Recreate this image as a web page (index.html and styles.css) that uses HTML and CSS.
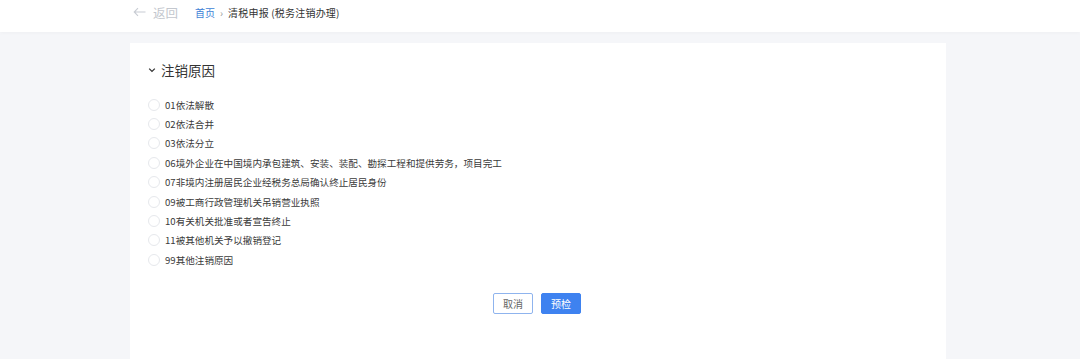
FILE: index.html
```html
<!DOCTYPE html>
<html lang="zh-CN">
<head>
  <meta charset="UTF-8" />
  <meta name="viewport" content="width=device-width, initial-scale=1" />
  <title>清税申报（税务注销办理）</title>
  <link rel="stylesheet" href="styles.css">
</head>
<body>

<div class="topbar">
  <div class="topbar-inner">
    <a class="back" href="#">
      <svg class="back-icon" width="13" height="10" viewBox="0 0 13 10">
        <path d="M12.5 5H1.2M5 1.2L1.2 5L5 8.8" fill="none" stroke="#c8ccd3" stroke-width="1.1" />
      </svg>
      返回
    </a>
    <div class="crumbs">
      <a href="#">首页</a>
      <span class="sep">›</span>
      <span class="current">清税申报 (税务注销办理)</span>
    </div>
  </div>
</div>

<div class="main">
  <div class="card">
    <div class="section-title">
      <svg class="chevron" width="8" height="6" viewBox="0 0 8 6">
        <path d="M1.2 1.6L4 4.4L6.8 1.6" fill="none" stroke="#333" stroke-width="1.3" />
      </svg>
      注销原因
    </div>
    <ul class="reason-list">
      <li><span class="radio"></span>01依法解散</li>
      <li><span class="radio"></span>02依法合并</li>
      <li><span class="radio"></span>03依法分立</li>
      <li><span class="radio"></span>06境外企业在中国境内承包建筑、安装、装配、勘探工程和提供劳务，项目完工</li>
      <li><span class="radio"></span>07非境内注册居民企业经税务总局确认终止居民身份</li>
      <li><span class="radio"></span>09被工商行政管理机关吊销营业执照</li>
      <li><span class="radio"></span>10有关机关批准或者宣告终止</li>
      <li><span class="radio"></span>11被其他机关予以撤销登记</li>
      <li><span class="radio"></span>99其他注销原因</li>
    </ul>
    <div class="actions">
      <button class="btn btn-plain">取消</button>
      <button class="btn btn-primary">预检</button>
    </div>
  </div>
</div>

</body>
</html>
```

FILE: styles.css
```css
* {
  margin: 0; padding: 0; box-sizing: border-box;
  font-family: 'Microsoft YaHei', 'Noto Sans CJK SC', sans-serif;
}
body {
  background-color: #f5f6f9;
  min-height: 100vh;
}
.topbar {
  background: white;
  height: 32px;
  box-shadow: 0 1px 4px rgba(0,0,0,0.03);
}
.topbar-inner {
  width: 816px;
  margin-left: calc(50% - 410px);
  height: 100%;
  display: flex;
  align-items: center;
  padding-left: 3px;
  padding-bottom: 8px;
}
.back {
  display: flex;
  align-items: center;
  gap: 7px;
  color: #c3c7ce;
  font-size: 12.5px;
  text-decoration: none;
}
.crumbs {
  margin-left: 17px;
  display: flex;
  align-items: center;
  font-size: 10px;
}
.crumbs a {
  color: #3e7fd6;
  text-decoration: none;
}
.crumbs .sep {
  color: #999;
  margin: 0 5px;
  font-size: 10px;
}
.crumbs .current {
  color: #333;
  letter-spacing: 0.2px;
}
.main {
  padding-top: 11px;
}
.card {
  width: 816px;
  margin-left: calc(50% - 410px);
  background: white;
  min-height: 320px;
  padding: 17px 20px 0 18px;
}
.section-title {
  display: flex;
  align-items: center;
  gap: 5px;
  font-size: 13.5px;
  color: #333;
  height: 20px;
}
.reason-list {
  list-style: none;
  margin-top: 15px;
}
.reason-list li {
  display: flex;
  align-items: center;
  height: 19.4px;
  font-size: 9.6px;
  color: #3a3a3a;
}
.radio {
  width: 12px;
  height: 12px;
  border: 1px solid #e6e8ec;
  border-radius: 50%;
  margin-right: 5px;
}
.actions {
  display: flex;
  justify-content: center;
  gap: 8px;
  margin-top: 23px;
}
.btn {
  width: 40px;
  height: 21px;
  border-radius: 2px;
  font-size: 10px;
  cursor: pointer;
}
.btn-plain {
  background: white;
  border: 1px solid #8fb4ee;
  color: #666;
}
.btn-primary {
  background: #3e82f0;
  border: 1px solid #3e82f0;
  color: white;
}
```
